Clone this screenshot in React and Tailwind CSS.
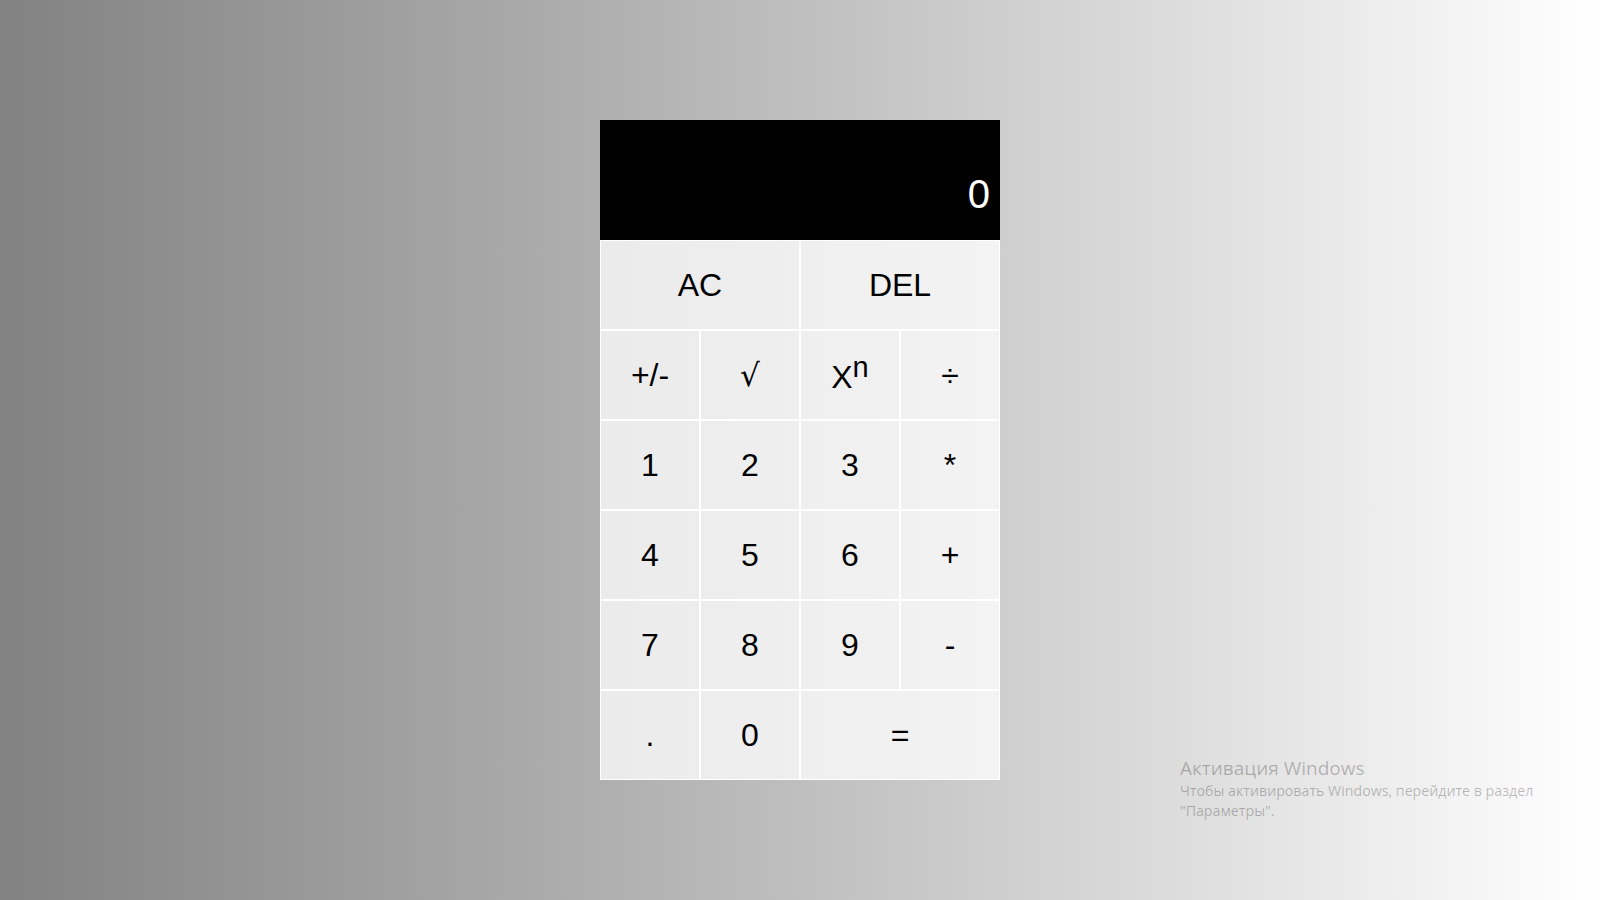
import React from "react";

const rows = [
  [{ t: "AC", span: 2 }, { t: "DEL", span: 2 }],
  [{ t: "+/-" }, { t: "√", serif: true }, { t: "Xn", sup: true }, { t: "÷" }],
  [{ t: "1" }, { t: "2" }, { t: "3" }, { t: "*" }],
  [{ t: "4" }, { t: "5" }, { t: "6" }, { t: "+" }],
  [{ t: "7" }, { t: "8" }, { t: "9" }, { t: "-" }],
  [{ t: "." }, { t: "0" }, { t: "=", span: 2 }],
];

export default function App() {
  return (
    <div
      className="relative w-full h-[900px] overflow-hidden bg-gradient-to-r from-[#828282] to-white flex justify-center pt-[120px]"
      style={{ fontFamily: '"Liberation Sans", Arial, sans-serif' }}
    >
      <div className="w-[400px] h-[660px] grid grid-cols-4 auto-rows-[90px] grid-rows-[120px]">
        <div className="col-span-4 h-[120px] bg-black flex items-end justify-end pr-[10px] pb-[23px]">
          <span className="text-white text-[40px] leading-[46px]">0</span>
        </div>
        {rows.flat().map((b, i) => (
          <button
            key={i}
            className={`${b.span === 2 ? "col-span-2" : ""} h-[90px] border border-white bg-white/75 text-black text-[32px] leading-[37px] flex items-center justify-center cursor-pointer`}
          >
            {b.sup ? (
              <span className="flex items-start pt-[4px]">
                <span>X</span>
                <span className="text-[29px] leading-[26px] -mt-[5px]">n</span>
              </span>
            ) : b.serif ? (
              <span
                className="text-[31px] font-extralight"
                style={{ fontFamily: '"DejaVu Serif", "DejaVu Sans", serif' }}
              >
                √
              </span>
            ) : (
              b.t
            )}
          </button>
        ))}
      </div>

      <div
        className="absolute right-[48px] bottom-[79px] w-[372px] text-black/25"
        style={{ fontFamily: '"Open Sans", "Noto Sans", sans-serif' }}
      >
        <div className="text-[19px] leading-[26px]">Активация Windows</div>
        <div className="text-[14.2px] leading-[20px]">
          Чтобы активировать Windows, перейдите в раздел
          <br />
          "Параметры".
        </div>
      </div>
    </div>
  );
}
